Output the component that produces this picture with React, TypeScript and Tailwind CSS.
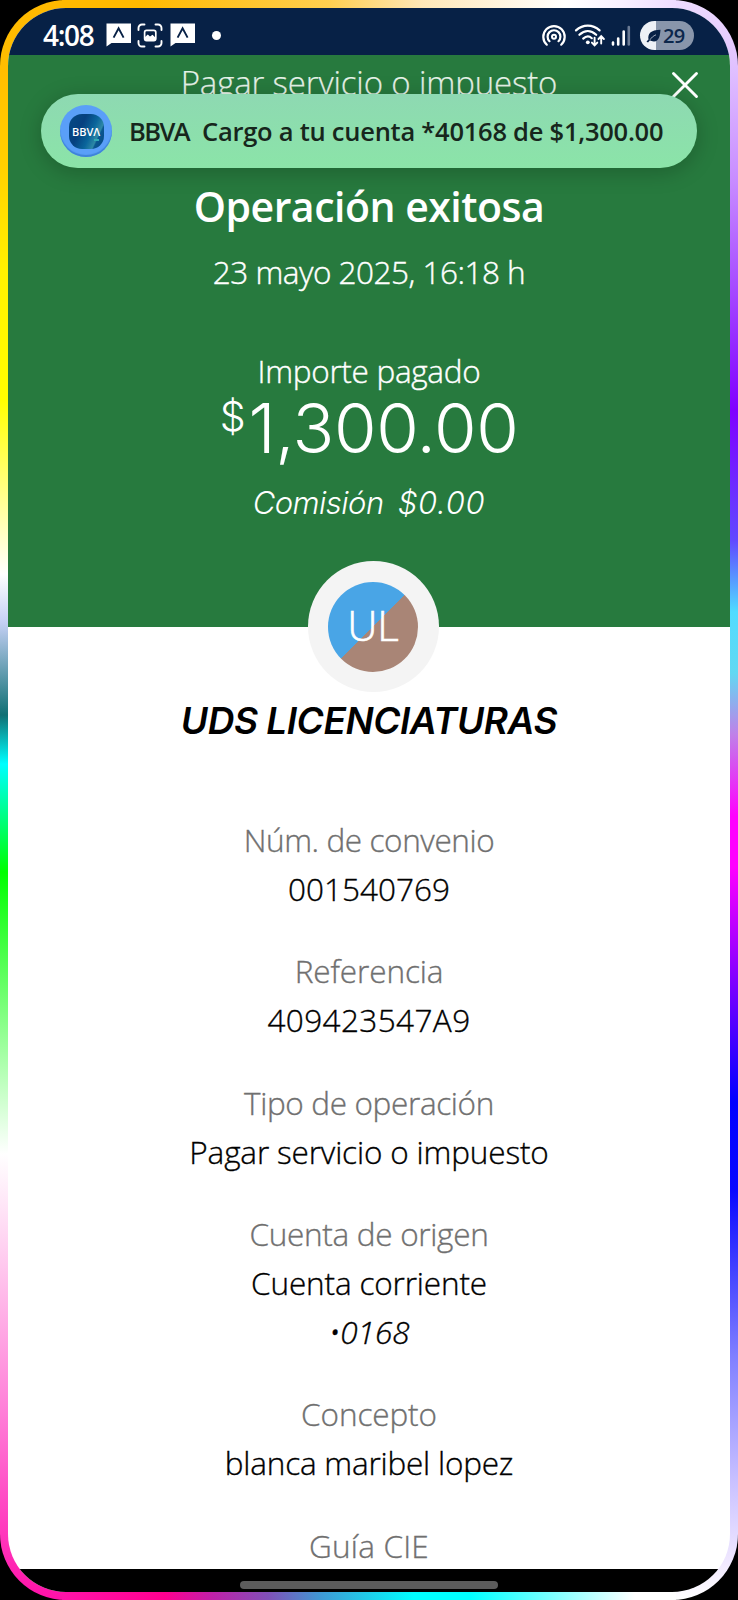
type Line = { text: string; className?: string };
type Detail = { label: string; labelClass?: string; lines: Line[] };

const details: Detail[] = [
  { label: "Núm. de convenio", labelClass: "tracking-[-0.4px]", lines: [{ text: "001540769" }] },
  { label: "Referencia", labelClass: "tracking-[-0.1px]", lines: [{ text: "409423547A9", className: "tracking-[0.4px]" }] },
  { label: "Tipo de operación", labelClass: "tracking-[-0.35px]", lines: [{ text: "Pagar servicio o impuesto", className: "tracking-[-0.15px]" }] },
  {
    label: "Cuenta de origen",
    labelClass: "tracking-[-0.3px]",
    lines: [{ text: "Cuenta corriente", className: "tracking-[-0.15px]" }, { text: "•0168", className: "italic" }],
  },
  { label: "Concepto", labelClass: "tracking-[-0.1px]", lines: [{ text: "blanca maribel lopez", className: "tracking-[-0.2px]" }] },
  { label: "Guía CIE", labelClass: "tracking-[0.2px]", lines: [] },
];

function BubbleIcon() {
  return (
    <svg width="26" height="24" viewBox="0 0 26 24">
      <path d="M0.5 0.5H25V20H5.5L0.5 23.5Z" fill="#fff" />
      <path d="M7.6 14.6L12.6 5.2L17.6 14.6" fill="none" stroke="#072146" strokeWidth="1.9" />
    </svg>
  );
}

function CaptureIcon() {
  return (
    <svg width="26" height="26" viewBox="0 0 26 26" fill="none">
      <path
        d="M1.5 7V5A3.5 3.5 0 0 1 5 1.5H7.5M18.5 1.5H21A3.5 3.5 0 0 1 24.5 5V7M24.5 18V20A3.5 3.5 0 0 1 21 23.5H18.5M7.5 23.5H5A3.5 3.5 0 0 1 1.5 20V18"
        stroke="#fff"
        strokeWidth="1.9"
        strokeLinecap="round"
      />
      <rect x="7.6" y="7.4" width="11.2" height="10.2" rx="2" stroke="#fff" strokeWidth="1.7" />
      <path d="M8 16.5V14L10.8 11.6L13 13.6L15.5 11.8L18.4 14.5V17H8Z" fill="#fff" />
    </svg>
  );
}

function HotspotIcon() {
  return (
    <svg width="26" height="24" viewBox="0 0 26 24" fill="none" stroke="#fff" strokeWidth="2.2" strokeLinecap="round">
      <path d="M5.8 20.7A10.7 10.7 0 1 1 20.2 20.7" />
      <path d="M8.5 17.2A6.4 6.4 0 1 1 17.5 17.2" />
      <circle cx="13" cy="12.7" r="2" strokeWidth="2" />
    </svg>
  );
}

function WifiIcon() {
  return (
    <svg width="32" height="24" viewBox="0 0 32 24" fill="none" stroke="#fff" strokeLinecap="round">
      <path d="M2 6.4C9 0 18.6 0 25.6 6.4" strokeWidth="2.2" />
      <path d="M5.4 10.8C10.6 6 17 6 22.2 10.8" strokeWidth="2.2" />
      <path d="M9.2 14.6C12 12 15.4 12 17.8 14.2" strokeWidth="2.2" />
      <circle cx="13.8" cy="18.3" r="1.9" fill="#fff" stroke="none" />
      <path d="M20.6 13.6V21M17.9 18.6L20.6 21.4L23.3 18.6" strokeWidth="1.9" />
      <path d="M27.2 19.6V12.6M24.5 15L27.2 12.2L29.9 15" strokeWidth="1.9" />
    </svg>
  );
}

function SignalIcon() {
  return (
    <svg width="20" height="22" viewBox="0 0 20 22" strokeWidth="2.6" strokeLinecap="round" stroke="#fff">
      <path d="M2 17.5V19.5M7.2 13.5V19.5M12.7 6.5V19.5" />
      <path d="M17.8 2V19.5" stroke="#6a7a94" />
    </svg>
  );
}

function StatusBar() {
  return (
    <div className="flex h-[47px] shrink-0 justify-between bg-[#072146] text-white">
      <div className="flex items-start pl-[35px]">
        <span className="w-[63px] pt-[9px] text-[28px] leading-[36px] font-semibold tracking-[-1.3px]">4:08</span>
        <div className="flex items-start pt-[15px]">
          <BubbleIcon />
          <div className="pl-[5px]">
            <CaptureIcon />
          </div>
          <div className="pl-[7px]">
            <BubbleIcon />
          </div>
          <div className="mt-[8px] ml-[16px] h-[9px] w-[9px] rounded-full bg-white" />
        </div>
      </div>
      <div className="flex items-start pr-[36px]">
        <div className="pt-[16px]">
          <HotspotIcon />
        </div>
        <div className="pt-[16px] pl-[7px]">
          <WifiIcon />
        </div>
        <div className="pt-[17px] pl-[5px]">
          <SignalIcon />
        </div>
        <div className="mt-[13px] ml-[9px] flex h-[29px] w-[54px] items-center rounded-full bg-[linear-gradient(90deg,#eef1f6_30%,#8996ab_30%)] pl-[6px]">
          <svg width="16" height="14" viewBox="0 0 16 14">
            <path d="M0.5 12.5L2.5 10.5C1.5 5 4.5 1 14.5 0.8C14 6 13.5 12.5 8 12.5C6 12.5 4.8 12 4 11.3L2 13.4Z" fill="#072146" />
            <path d="M4 10.8C5.5 8.5 7.2 7 10 5.8" fill="none" stroke="#c5ccd8" strokeWidth="0.8" />
          </svg>
          <span className="pl-[1px] text-[20px] leading-[27px] font-semibold tracking-[-0.8px] text-[#0c274b]">29</span>
        </div>
      </div>
    </div>
  );
}

function Notification() {
  return (
    <div className="absolute top-[86px] left-[33px] flex h-[74px] w-[656px] items-center rounded-full bg-[linear-gradient(180deg,#8ed9b2,#8be4a8)] pl-[19px] whitespace-nowrap text-[#17261c] shadow-[0_4px_22px_rgba(0,0,0,0.22)]">
      <div className="flex h-[52px] w-[52px] items-center justify-center rounded-full bg-[#5a9ff8] shadow-[inset_0_-2px_1px_#3e83d8]">
        <div className="relative flex h-[35px] w-[35px] items-center justify-center rounded-[13px] bg-[linear-gradient(115deg,#054a85_0%,#05407f_35%,#0a659b_60%,#2e88a5_76%,#0a5790_79%,#064580_100%)]">
          <span className="text-[11px] leading-none font-semibold text-white">BBVΛ</span>
          <span className="absolute right-[5px] bottom-[8px] h-[2px] w-[5px] bg-[#2fa9b4]" />
        </div>
      </div>
      <span className="w-[73px] pl-[17px] text-[25.5px] font-semibold tracking-[-1.6px]">BBVA</span>
      <span className="pl-[17px] text-[25.5px] font-semibold tracking-[-0.25px]">Cargo a tu cuenta *40168 de $1,300.00</span>
    </div>
  );
}

function Summary() {
  return (
    <header className="flex h-[572px] shrink-0 flex-col items-center bg-[#277a3e] pt-[4px] text-white">
      <div className="grid w-full grid-cols-[1fr_auto_1fr]">
        <h1 className="col-start-2 text-[33px] leading-[48px] font-light tracking-[-0.15px] text-[#e6f2e8] [-webkit-text-stroke:0.2px]">
          Pagar servicio o impuesto
        </h1>
        <svg className="mt-[11px] mr-[30px] justify-self-end" width="30" height="30" viewBox="0 0 30 30">
          <path d="M3.5 3.5L26.5 26.5M26.5 3.5L3.5 26.5" stroke="#fff" strokeWidth="2.9" strokeLinecap="round" />
        </svg>
      </div>
      <h2 className="mt-[71px] text-[41px] leading-[56px] font-semibold tracking-[-0.5px]">Operación exitosa</h2>
      <p className="mt-[18px] text-[31.5px] leading-[40px] font-light tracking-[-0.5px] [-webkit-text-stroke:0.4px]">23 mayo 2025, 16:18 h</p>
      <p className="mt-[59px] text-[31.5px] leading-[40px] font-light tracking-[-0.3px] [-webkit-text-stroke:0.4px]">Importe pagado</p>
      <p className="mt-[2px] flex h-[69px] items-start font-['Inter','Open_Sans',sans-serif] font-light">
        <span className="mt-px pr-[3px] text-[41px] leading-[44px]">$</span>
        <span className="text-[69px] leading-[70px] tracking-[-0.4px]">1,300.00</span>
      </p>
      <p className="mt-[21px] flex gap-[14px] font-['Inter','Open_Sans',sans-serif] text-[31px] leading-[40px] font-light italic">
        <span className="tracking-[-0.5px]">Comisión</span>
        <span className="tracking-[0.7px]">$0.00</span>
      </p>
    </header>
  );
}

function Avatar() {
  return (
    <div className="absolute top-[553px] left-[299.5px] flex h-[131px] w-[131px] items-center justify-center rounded-full bg-[#f4f4f4]">
      <div className="flex h-[90px] w-[90px] items-center justify-center rounded-full bg-[linear-gradient(135deg,#49a5e6_50%,#a98576_50%)]">
        <span className="-mt-[3px] text-[42px] leading-[56px] font-light text-white [-webkit-text-stroke:0.6px]">UL</span>
      </div>
    </div>
  );
}

export default function App() {
  return (
    <div className="h-[1600px] w-[738px] bg-black font-['Open_Sans','Noto_Sans',sans-serif]">
      <div className="relative h-[1600px] w-[738px] overflow-hidden rounded-[66px] p-2">
        <div className="absolute inset-0 flex">
          <div className="flex-1 bg-[linear-gradient(180deg,#ffb900_0px,#ffbe00_70px,#ffd200_170px,#fff200_270px,#ffff00_400px,#ffffff_574px,#c5d0f5_622px,#0f7074_715px,#00ffff_764px,#00ff00_872px,#ffffff_1154px,#ff80d8_1410px,#ff40c0_1519px,#ff10a8_1600px)]" />
          <div className="flex-1 bg-[linear-gradient(180deg,#eedcff_0px,#e2c4ff_60px,#c88cff_180px,#8000ff_410px,#6048ff_540px,#50dcff_612px,#62d8f2_673px,#c080e8_735px,#ff00ff_816px,#ff00ff_867px,#8000ff_980px,#0000ff_1102px,#0808ff_1190px,#8080ff_1357px,#c8c0ff_1480px,#f2eaff_1565px,#ffffff_1600px)]" />
        </div>
        <div className="absolute top-0 right-[62px] left-[62px] h-2 bg-[linear-gradient(90deg,#ffb900_0px,#ffb900_80px,#ffcf50_267px,#ffe8b8_361px,#ffffff_503px,#f8f0ff_560px,#eedcff_614px)]" />
        <div className="absolute right-[62px] bottom-0 left-[62px] h-2 bg-[linear-gradient(90deg,#ff14a9_0px,#ff0090_103px,#c020a8_150px,#8050b8_206px,#4098d4_258px,#00ffff_352px,#00ffff_408px,#80ffff_493px,#ffffff_573px)]" />
        <div className="relative flex h-full flex-col overflow-hidden rounded-[58px] bg-white">
          <StatusBar />
          <Summary />
          <main className="flex min-h-0 flex-1 flex-col items-center overflow-hidden">
            <h3 className="mt-[69px] shrink-0 font-['Inter','Open_Sans',sans-serif] text-[37px] leading-[50px] font-semibold tracking-[-0.45px] text-black italic">
              UDS LICENCIATURAS
            </h3>
            <dl className="mt-[69px] flex flex-col gap-[33.1px] text-center text-[31.5px] leading-[49.1px] font-light [-webkit-text-stroke:0.35px]">
              {details.map((d) => (
                <div key={d.label}>
                  <dt className={`text-[#707070] ${d.labelClass ?? ""}`}>{d.label}</dt>
                  {d.lines.map((l) => (
                    <dd key={l.text} className={`text-black ${l.className ?? ""}`}>
                      {l.text}
                    </dd>
                  ))}
                </div>
              ))}
            </dl>
          </main>
          <div className="flex h-[23px] shrink-0 justify-center bg-black pt-[12px]">
            <div className="h-[8px] w-[258px] rounded-full bg-[#5c5c5c]" />
          </div>
          <Notification />
          <Avatar />
        </div>
      </div>
    </div>
  );
}
